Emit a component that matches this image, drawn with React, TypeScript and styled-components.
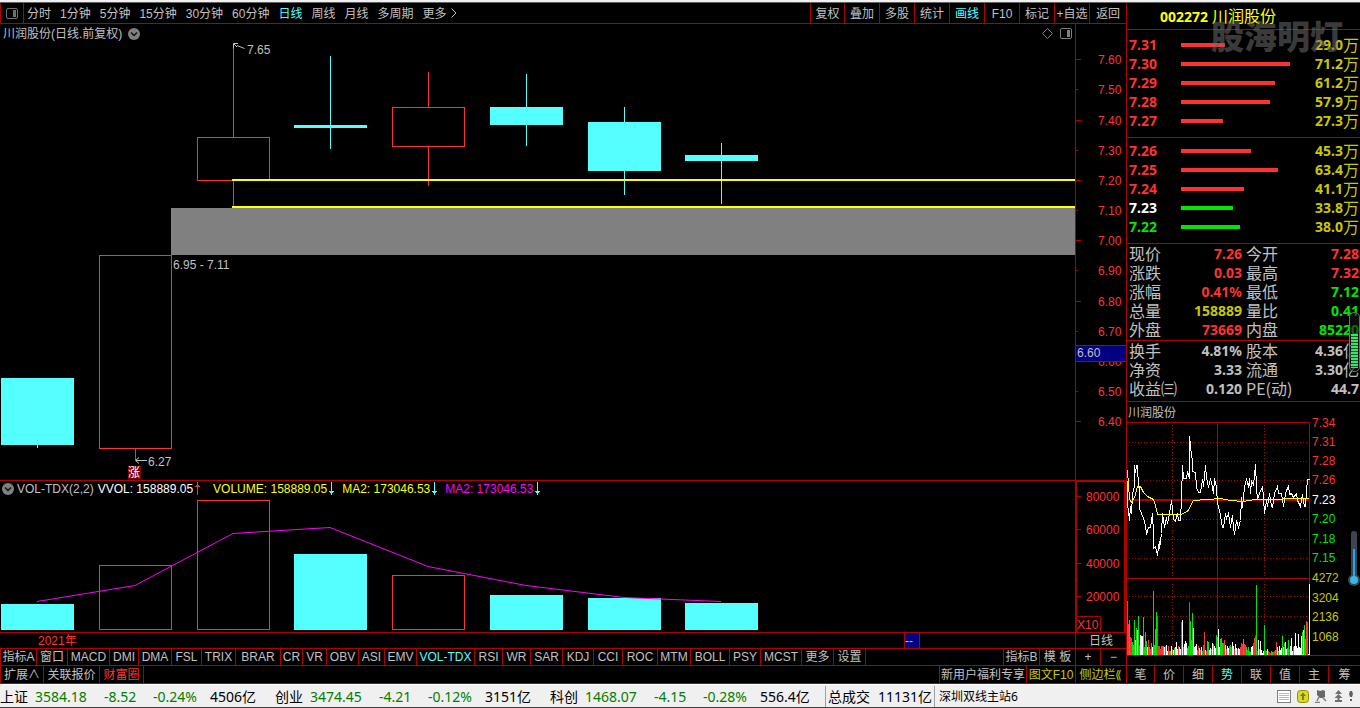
import React from "react";
import styled, { createGlobalStyle } from "styled-components";

const LINE = "#b00000";
const RED = "#ff3232";
const GREEN = "#00e600";
const CYAN = "#54ffff";
const GREY = "#c0c0c0";
const OLIVE = "#c8c800";
const YELLOW = "#ffff00";
const MAGENTA = "#ff00ff";

const Global = createGlobalStyle`
  * { box-sizing: border-box; }
  body {
    margin: 0;
    background: #000;
    color: ${GREY};
    font: 12px/16px "Liberation Sans", "Noto Sans CJK SC", sans-serif;
  }
  svg { display: block; flex: none; }
  svg text { font-size: 12px; }
  button { font: inherit; color: inherit; background: none; border: 0; padding: 0; margin: 0; white-space: nowrap; cursor: pointer; }
`;

/* ---------- page frame ---------- */

const Page = styled.div`
  min-height: 100vh;
  display: flex;
  flex-direction: column;
  border-top: 2px solid #f0f0f0;
`;

const Body = styled.div`
  flex: 1;
  display: grid;
  grid-template-columns: minmax(0, 1fr) 233px;
  border-top: 1px solid #606060;
`;

const Left = styled.main`
  display: flex;
  flex-direction: column;
  min-width: 0;
  border-right: 1px solid ${LINE};
`;

const Right = styled.aside`
  position: relative;
  display: flex;
  flex-direction: column;
  min-width: 0;
`;

const Spacer = styled.div`
  flex: 1;
`;

/* ---------- toolbar ---------- */

const Toolbar = styled.nav`
  display: flex;
  height: 21px;
  border-bottom: 1px solid ${LINE};
  border-left: 1px solid ${LINE};
`;

const IconCell = styled.button`
  width: 23px;
  border-right: 1px solid ${LINE};
  display: flex;
  align-items: center;
  justify-content: center;
`;

const Periods = styled.div`
  display: flex;
  gap: 9px;
  padding-left: 3px;
`;

const PlainButton = styled.button<{ $color?: string }>`
  padding-top: 1px;
  color: ${(p) => p.$color || GREY};
`;

const ToolCell = styled.button<{ $w: number; $color?: string }>`
  width: ${(p) => p.$w}px;
  padding-top: 1px;
  border-left: 1px solid ${LINE};
  color: ${(p) => p.$color || GREY};
`;

/* ---------- charts ---------- */

const ChartRow = styled.section<{ $lined?: boolean }>`
  display: grid;
  grid-template-columns: minmax(0, 1fr) 51px;
  border-top: ${(p) => (p.$lined ? `1px solid ${LINE}` : "0")};
`;

const Plot = styled.div`
  min-width: 0;
`;

const Axis = styled.div`
  border-left: 1px solid ${LINE};
`;

const VolumeAxis = styled.div`
  border: 2px solid ${LINE};
  border-top-width: 1px;
  border-bottom: 0;
`;

const PlotTitle = styled.header`
  display: flex;
  align-items: center;
  height: 18px;
  padding: 1px 2px 0 3px;
`;

const TitleText = styled.h1`
  margin: 0 6px 0 0;
  font: inherit;
`;

const TitleIcons = styled.div`
  display: flex;
  gap: 7px;
  padding-right: 1px;
`;

const Legend = styled.header`
  display: flex;
  align-items: flex-start;
  height: 17px;
  padding-left: 2px;
  gap: 3px;
  & > svg { margin-top: 2px; }
`;

const LegendItem = styled.span<{ $color: string; $after: number }>`
  display: flex;
  align-items: center;
  gap: 2px;
  padding-right: ${(p) => p.$after}px;
  color: ${(p) => p.$color};
`;

/* ---------- bottom rows ---------- */

const DateRow = styled.div`
  display: flex;
  height: 17px;
  line-height: 16px;
  border: solid ${LINE};
  border-width: 1px 0;
`;

const Year = styled.span`
  padding-left: 38px;
  color: ${RED};
`;

const DateMark = styled.span`
  width: 16px;
  margin-right: 155px;
  background: #000080;
  border: solid ${LINE};
  border-width: 0 1px;
`;

const PeriodCell = styled.span`
  width: 51px;
  border-left: 1px solid ${LINE};
  text-align: center;
`;

const CellRow = styled.div<{ $h: number }>`
  display: flex;
  height: ${(p) => p.$h}px;
  border-bottom: 1px solid ${LINE};
  border-left: 1px solid ${LINE};
`;

const Cell = styled.button<{ $w: number; $color?: string; $side?: "left" | "right" }>`
  flex: none;
  width: ${(p) => p.$w}px;
  border: 0 solid ${LINE};
  ${(p) => (p.$side === "left" ? "border-left-width" : "border-right-width")}: 1px;
  display: flex;
  align-items: flex-end;
  justify-content: center;
  color: ${(p) => p.$color || GREY};
`;

/* ---------- quote panel ---------- */

const StockHead = styled.h2`
  margin: 0;
  height: 27px;
  padding-left: 33px;
  border-bottom: 1px solid ${LINE};
  color: ${YELLOW};
  font: 16px/24px "Noto Sans CJK SC", sans-serif;
`;

const Code = styled.b`
  font: bold 14px/24px "Noto Sans", sans-serif;
  margin-right: 4px;
`;

const Book = styled.table<{ $top: number }>`
  width: 100%;
  table-layout: fixed;
  border-collapse: separate;
  border-spacing: 0;
  border-bottom: 1px solid ${LINE};
  padding: ${(p) => p.$top}px 0 7px;
  font: bold 14px/19px "Noto Sans", "Noto Sans CJK SC", sans-serif;
`;

const BookPrice = styled.th<{ $color: string }>`
  width: 54px;
  height: 19px;
  padding: 0 0 0 2px;
  text-align: left;
  color: ${(p) => p.$color};
`;

const BookBar = styled.td`
  padding: 0;
`;

const Bar = styled.div<{ $color: string }>`
  height: 4px;
  background: ${(p) => p.$color};
`;

const BookVolume = styled.td`
  width: 60px;
  height: 19px;
  padding: 0 1px 0 0;
  text-align: right;
  color: ${OLIVE};
`;

const Unit = styled.span`
  font: 16px/19px "Noto Sans CJK SC", sans-serif;
  vertical-align: top;
`;

const Quotes = styled.dl<{ $bottom: number }>`
  display: grid;
  grid-template-columns: 113px 1fr;
  column-gap: 4px;
  margin: 0;
  padding: 0 1px ${(p) => p.$bottom}px 2px;
  border-bottom: 1px solid ${LINE};
`;

const Quote = styled.div`
  display: flex;
  justify-content: space-between;
  height: 19px;
`;

const QuoteName = styled.dt`
  font: 16px/19px "Noto Sans CJK SC", sans-serif;
  white-space: nowrap;
`;

const QuoteValue = styled.dd<{ $color: string }>`
  margin: 0;
  font: bold 14px/19px "Noto Sans", sans-serif;
  color: ${(p) => p.$color};
  white-space: nowrap;
`;

const MiniTitle = styled.h3`
  margin: 0;
  height: 20px;
  padding-left: 1px;
  font: inherit;
  line-height: 22px;
`;

const Tabs = styled.div`
  display: grid;
  grid-template-columns: 28px repeat(6, 29px) 1fr;
  height: 19px;
  border: solid ${LINE};
  border-width: 1px 0;
`;

const Tab = styled.button<{ $on: boolean }>`
  border-right: 1px solid ${LINE};
  color: ${(p) => (p.$on ? CYAN : GREY)};
  &:last-child { border-right: 0; }
`;

const Watermark = styled.div`
  position: absolute;
  top: 12px;
  left: 84px;
  font: 900 33px/40px "Noto Sans CJK SC", sans-serif;
  color: rgba(110, 110, 110, 0.55);
  white-space: nowrap;
  pointer-events: none;
`;

const Gauge = styled.div`
  position: absolute;
  top: 309px;
  right: 0;
  width: 11px;
  height: 60px;
  padding: 21px 1px 2px;
  border: 1px solid #707070;
  border-radius: 5px;
  background: rgba(20, 20, 20, 0.6);
`;

const GaugeFill = styled.div`
  height: 34px;
  background: repeating-linear-gradient(#3fe070 0 2px, #0c5a28 2px 3px);
`;

const Thermo = styled.div`
  position: absolute;
  top: 528px;
  right: 0;
`;

/* ---------- status bar ---------- */

const Status = styled.footer`
  display: flex;
  align-items: center;
  height: 24px;
  border-top: 1px solid #fff;
  border-bottom: 1px solid #404040;
  background: #f0f0f0;
  color: #000;
  font: 14px/22px "Noto Sans", "Noto Sans CJK SC", sans-serif;
  white-space: nowrap;
  overflow: hidden;
  padding-top: 2px;
`;

const StatusItem = styled.span<{ $w: number; $down?: boolean }>`
  flex: none;
  width: ${(p) => p.$w}px;
  color: ${(p) => (p.$down ? "#008000" : "#000")};
`;

const Total = styled.span`
  display: flex;
  gap: 8px;
  padding: 0 2px;
  border: solid #a0a0a0;
  border-width: 0 1px;
`;

const Station = styled.span`
  padding-left: 4px;
  font-size: 12px;
`;

const StatusIcons = styled.div`
  display: flex;
  align-items: center;
  gap: 6px;
  padding: 0 7px 2px 0;
`;

/* ---------- data ---------- */

const periods = ["分时", "1分钟", "5分钟", "15分钟", "30分钟", "60分钟", "日线", "周线", "月线", "多周期", "更多"];
const tools: [string, number][] = [
  ["复权", 34], ["叠加", 35], ["多股", 35], ["统计", 35], ["画线", 35], ["F10", 35], ["标记", 35], ["+自选", 35], ["返回", 37],
];

const indicators: [string, number][] = [
  ["指标A", 36], ["窗口", 31], ["MACD", 42], ["DMI", 29], ["DMA", 33], ["FSL", 30], ["TRIX", 34], ["BRAR", 45],
  ["CR", 22], ["VR", 24], ["OBV", 32], ["ASI", 26], ["EMV", 32], ["VOL-TDX", 58], ["RSI", 28], ["WR", 28],
  ["SAR", 32], ["KDJ", 31], ["CCI", 29], ["ROC", 35], ["MTM", 33], ["BOLL", 39], ["PSY", 31], ["MCST", 41],
  ["更多", 32], ["设置", 32],
];

type Candle = { x: number; top: number; bottom: number; high: number; low: number; up: boolean; vol: number };
const candles: Candle[] = [
  { x: 37, top: 336, bottom: 403, high: 336, low: 406, up: false, vol: 106 },
  { x: 135, top: 213, bottom: 406, high: 213, low: 418, up: true, vol: 67 },
  { x: 233, top: 95, bottom: 138, high: 2, low: 165, up: true, vol: 2 },
  { x: 330, top: 83, bottom: 86, high: 14, low: 107, up: false, vol: 56 },
  { x: 428, top: 65, bottom: 104, high: 30, low: 144, up: true, vol: 77 },
  { x: 526, top: 65, bottom: 83, high: 32, low: 104, up: false, vol: 97 },
  { x: 624, top: 80, bottom: 129, high: 65, low: 153, up: false, vol: 100 },
  { x: 721, top: 113, bottom: 119, high: 101, low: 162, up: false, vol: 105 },
];

const prices = ["7.60", "7.50", "7.40", "7.30", "7.20", "7.10", "7.00", "6.90", "6.80", "6.70", "6.60", "6.50", "6.40"];
const volumes = ["80000", "60000", "40000", "20000"];

type Level = [string, number, string, string, string?];
const asks: Level[] = [
  ["7.31", 44, "29.0", RED], ["7.30", 109, "71.2", RED], ["7.29", 94, "61.2", RED],
  ["7.28", 89, "57.9", RED], ["7.27", 42, "27.3", RED],
];
const bids: Level[] = [
  ["7.26", 70, "45.3", RED], ["7.25", 97, "63.4", RED], ["7.24", 63, "41.1", RED],
  ["7.23", 52, "33.8", GREEN, "#fff"], ["7.22", 59, "38.0", GREEN],
];

type Q = [string, string, string, string?];
const quotes: Q[] = [
  ["现价", "7.26", RED], ["今开", "7.28", RED],
  ["涨跌", "0.03", RED], ["最高", "7.32", RED],
  ["涨幅", "0.41%", RED], ["最低", "7.12", GREEN],
  ["总量", "158889", OLIVE], ["量比", "0.41", GREEN],
  ["外盘", "73669", RED], ["内盘", "85220", GREEN],
];
const finance: Q[] = [
  ["换手", "4.81%", GREY], ["股本", "4.36", GREY, "亿"],
  ["净资", "3.33", GREY], ["流通", "3.30", GREY, "亿"],
  ["收益㈢", "0.120", GREY], ["PE(动)", "44.7", GREY],
];

const tickLine =
  "0,58 0,81 2,98 3,84 4,91 5,72 7,63 7,43 8,50 9,43 10,43 11,65 12,65 12,86 14,91 16,96 18,103 19,112 21,105 23,105 25,91 26,111 26,126 28,124 30,133 31,125 32,119 32,126 34,111 35,91 37,105 39,95 40,101 42,91 44,78 46,97 48,99 50,91 51,98 53,98 54,75 55,43 56,56 59,56 60,49 62,56 62,14 64,33 65,38 65,49 68,50 69,65 71,70 73,70 75,57 76,64 78,43 79,55 81,65 83,56 85,65 86,71 87,56 89,65 90,81 92,88 95,105 96,105 98,91 99,96 101,91 103,105 105,93 106,105 107,112 109,98 111,105 113,98 114,75 115,85 117,65 119,56 121,65 122,56 123,71 124,58 126,63 128,42 129,65 130,77 132,71 135,64 136,75 137,91 139,78 140,84 142,71 144,84 145,85 147,71 150,64 151,71 154,71 156,84 158,71 161,63 162,72 164,71 166,75 169,71 170,78 173,84 175,72 177,84 178,84 179,68 180,57 182,57";
const averageLine =
  "0,49 2,78 4,81 7,76 10,65 13,65 16,71 20,75 26,78 28,84 30,93 54,93 61,89 64,82 66,79 80,78 93,77 103,79 116,80 128,78 182,77";

/* one token per minute column: colour letter and height in pixels */
const minuteVolumes =
  "r54 r31 g35 r18 r17 g13 g10 g35 w15 g27 w25 g39 g10 w20 w19 w19 g38 g8 g23 g14 w8 r15 g8 r6 g12 w8 g64 g10 g26 g43 r39 r9 r9 r6 r9 r9 g9 w8 r9 w10 w4 r9 g4 g4 w9 r6 w5 g7 w8 w13 w6 r9 w8 w6 r33 w35 r8 w11 w14 w12 g7 g9 r53 g34 g15 g42 w27 w8 w9 w11 g5 r9 w7 r5 w8 g4 r10 r23 w5 r4 g14 g13 w5 w7 r6 w12 g11 w9 w7 g20 g18 w26 w8 g16 g17 g12 r12 r15 w10 r6 w9 w7 r9 g10 r8 w13 w9 r6 w11 w7 r6 w7 w6 r8 r12 r11 g16 r11 r10 g8 r5 g8 g4 g3 w8 w9 r12 r17 r19 g70 r4 w15 g6 w14 w5 w2 w4 g30 r5 g4 w6 r4 r3 r2 g4 g3 r3 r4 g5 r13 w8 g4 w9 w5 w7 g19 w8 g12 w13 w6 g7 g15 r6 w9 w17 w4 g8 w9 w22 w9 w7 w21 w8 w7 w19 g23 w25 g30 g16 r34 r33 w1"
    .split(" ")
    .map((t) => ({ color: t[0] === "r" ? RED : t[0] === "g" ? GREEN : "#fff", h: Number(t.slice(1)) }));

const market: [string, number, boolean?][] = [
  ["上证", 35], ["3584.18", 69, true], ["-8.52", 49, true], ["-0.24%", 57, true], ["4506亿", 65],
  ["创业", 35], ["3474.45", 69, true], ["-4.21", 49, true], ["-0.12%", 57, true], ["3151亿", 65],
  ["科创", 35], ["1468.07", 69, true], ["-4.15", 49, true], ["-0.28%", 57, true], ["556.4亿", 65],
];

/* ---------- drawings ---------- */

const PanelIcon = ({ color = "#707070" }: { color?: string }) => (
  <svg width="12" height="11" viewBox="0 0 12 11">
    <rect x="0.5" y="0.5" width="11" height="10" rx="1.5" fill="none" stroke={color} />
    <rect x="7" y="2" width="3" height="7" fill={color} />
  </svg>
);

const DropIcon = () => (
  <svg width="12" height="12" viewBox="0 0 12 12">
    <circle cx="6" cy="6" r="6" fill="#808080" />
    <path d="M3 4.5 L6 7.5 L9 4.5" fill="none" stroke="#101010" strokeWidth="1.5" />
  </svg>
);

const Arrow = ({ up }: { up?: boolean }) => (
  <svg width="5" height="14" viewBox="0 0 5 14">
    {up ? (
      <path d="M2 0h1v3h1v1h1v1H3v8H2V5H0V4h1V3h1z" fill={RED} />
    ) : (
      <path d="M2 0h1v9h2v1H4v1H3v2H2v-2H1v-1H0V9h2z" fill={CYAN} />
    )}
  </svg>
);

const PriceChart = () => (
  <svg width="100%" height="438" role="img" aria-label="日线">
    <rect x="171" y="166" width="100%" height="47" fill="#808080" />
    {candles.map((c) => (
      <g key={c.x} fill={c.up ? "none" : CYAN} stroke={c.up ? RED : CYAN}>
        <path d={`M${c.x + 0.5} ${c.high}V${c.top}M${c.x + 0.5} ${c.bottom}V${c.low}`} />
        {c.up ? (
          <rect x={c.x - 35.5} y={c.top + 0.5} width="72" height={c.bottom - c.top} />
        ) : (
          <rect x={c.x - 36} y={c.top} width="73" height={c.bottom - c.top} stroke="none" />
        )}
        {!c.up && <path d={`M${c.x + 0.5} ${c.high}V${c.low}`} />}
      </g>
    ))}
    <rect x="232" y="137" width="100%" height="2" fill={YELLOW} />
    <rect x="232" y="164" width="100%" height="2" fill={YELLOW} />
    <path d="M233.500 6.500V1.500H238M234 2L237 5M237 3.500L244.500 6.500" fill="none" stroke={GREY} />
    <text x="247" y="12" fill={GREY}>7.65</text>
    <text x="173" y="227" fill={GREY}>6.95 - 7.11</text>
    <path d="M136 418.500H147M139 415.500L135.500 418.500L139 421.500" fill="none" stroke={GREY} />
    <text x="148" y="424" fill={GREY}>6.27</text>
    <rect x="128" y="424" width="13" height="13" fill="#800000" />
    <text x="128" y="435" fill="#fff">涨</text>
  </svg>
);

const PriceAxis = () => (
  <svg width="50" height="456">
    {prices.map((p, i) => {
      const y = Math.round(35.3 + i * 30.17);
      return (
        <g key={p}>
          <path d={`M0 ${y + 0.5}H${i % 2 ? 2 : 5}`} stroke={LINE} />
          <text x="22" y={y + 5} fill={RED}>{p}</text>
        </g>
      );
    })}
    <rect x="0" y="321" width="50" height="17" fill={LINE} />
    <rect x="0" y="322" width="50" height="15" fill="#000080" />
    <text x="1" y="333" fill={GREY}>6.60</text>
  </svg>
);

const VolumeChart = () => (
  <svg width="100%" height="134" role="img" aria-label="VOL-TDX">
    {candles.map((c) =>
      c.up ? (
        <rect key={c.x} x={c.x - 35.5} y={c.vol + 0.5} width="72" height={131 - c.vol} fill="none" stroke={RED} />
      ) : (
        <rect key={c.x} x={c.x - 36} y={c.vol} width="73" height={132 - c.vol} fill={CYAN} />
      )
    )}
    <polyline
      points="37,103.500 135,87.500 233,35.500 330,29.500 428,68.500 526,87.500 624,99.500 721,103.500"
      fill="none"
      stroke={MAGENTA}
    />
  </svg>
);

const VolumeScale = () => (
  <svg width="47" height="150">
    {volumes.map((v, i) => {
      const y = 14 + Math.round(i * 33.4);
      return (
        <g key={v}>
          <path d={`M0 ${y + 0.5}H4${i < 3 ? `M0 ${y + 17.5}H1` : ""}`} stroke={LINE} />
          <text x="9" y={y + 5} fill={RED}>{v}</text>
        </g>
      );
    })}
    <path d="M0 134.500H23.500V149" fill="none" stroke={LINE} />
    <text x="0" y="147" fill={RED}>X10</text>
  </svg>
);

const MiniPlot = styled.svg`
  overflow: visible;
`;

const MiniChart = () => {
  const labels: [string, number, string][] = [
    ["7.34", 1, RED], ["7.31", 20, RED], ["7.28", 39, RED], ["7.26", 58, RED], ["7.23", 78, "#fff"],
    ["7.20", 97, GREEN], ["7.18", 117, GREEN], ["7.15", 136, GREEN],
    ["4272", 156, OLIVE], ["3204", 176, OLIVE], ["2136", 195, OLIVE], ["1068", 215, OLIVE],
  ];
  return (
    <MiniPlot width="100%" height="234" role="img" aria-label="分时走势">
      <g stroke={LINE} fill="none">
        <path d="M0 .5H182.500V233.500M0 156.500H182M0 233.500H233M90.500 0V233" />
        <path d="M0 78H182" strokeWidth="2" />
        <g strokeDasharray="1 2">
          {[20, 39, 58, 97, 117, 136, 174, 194, 213].map((y) => (
            <path key={y} d={`M2 ${y + 0.5}H182`} />
          ))}
          <path d="M45.500 3V233" />
          <path d="M137.500 3V233" />
        </g>
      </g>
      {minuteVolumes.map((m, i) => (
        <rect key={i} x={i} y={233 - m.h} width="1" height={m.h} fill={m.color} />
      ))}
      <rect x="182" y="162" width="1" height="71" fill="#fff" />
      <polyline points={tickLine} fill="none" stroke="#fff" transform="translate(.5 .5)" shapeRendering="crispEdges" />
      <polyline points={averageLine} fill="none" stroke={YELLOW} transform="translate(.5 -.5)" shapeRendering="crispEdges" />
      {labels.map(([t, y, c]) => (
        <text key={t} x="185" y={y + 4} fill={c}>{t}</text>
      ))}
    </MiniPlot>
  );
};

/* ---------- parts ---------- */

const OrderBook = ({ rows, top }: { rows: Level[]; top: number }) => (
  <Book $top={top}>
    <tbody>
      {rows.map(([price, w, vol, color, priceColor]) => (
        <tr key={price}>
          <BookPrice scope="row" $color={priceColor || color}>{price}</BookPrice>
          <BookBar><Bar $color={color} style={{ width: w }} /></BookBar>
          <BookVolume>{vol}<Unit>万</Unit></BookVolume>
        </tr>
      ))}
    </tbody>
  </Book>
);

const QuoteList = ({ rows, bottom }: { rows: Q[]; bottom: number }) => (
  <Quotes $bottom={bottom}>
    {rows.map(([name, value, color, unit]) => (
      <Quote key={name}>
        <QuoteName>{name}</QuoteName>
        <QuoteValue $color={color}>{value}{unit && <Unit>{unit}</Unit>}</QuoteValue>
      </Quote>
    ))}
  </Quotes>
);

export default function App() {
  return (
    <Page>
      <Global />
      <Body>
        <Left>
          <Toolbar>
            <IconCell aria-label="侧栏"><PanelIcon /></IconCell>
            <Periods>
              {periods.map((p) => (
                <PlainButton key={p} $color={p === "日线" ? CYAN : undefined}>{p}</PlainButton>
              ))}
            </Periods>
            <svg width="12" height="20" viewBox="0 0 12 20">
              <path d="M4.500 5.500L9 10L4.500 14.500" fill="none" stroke={GREY} />
            </svg>
            <Spacer />
            {tools.map(([t, w]) => (
              <ToolCell key={t} $w={w} $color={t === "画线" ? CYAN : undefined}>{t}</ToolCell>
            ))}
          </Toolbar>

          <ChartRow>
            <Plot>
              <PlotTitle>
                <TitleText>川润股份(日线.前复权)</TitleText>
                <DropIcon />
                <Spacer />
                <TitleIcons>
                  <svg width="11" height="11" viewBox="0 0 11 11">
                    <path d="M5.500 .5L10.500 5.500L5.500 10.500L.5 5.500Z" fill="none" stroke="#808080" />
                  </svg>
                  <PanelIcon color="#808080" />
                </TitleIcons>
              </PlotTitle>
              <PriceChart />
            </Plot>
            <Axis><PriceAxis /></Axis>
          </ChartRow>

          <ChartRow $lined>
            <Plot>
              <Legend>
                <DropIcon />
                <LegendItem $color={GREY} $after={1}>VOL-TDX(2,2)</LegendItem>
                <LegendItem $color="#fff" $after={10}>VVOL: 158889.05<Arrow up /></LegendItem>
                <LegendItem $color={YELLOW} $after={5}>VOLUME: 158889.05<Arrow /></LegendItem>
                <LegendItem $color={YELLOW} $after={5}>MA2: 173046.53<Arrow /></LegendItem>
                <LegendItem $color={MAGENTA} $after={5}>MA2: 173046.53<Arrow /></LegendItem>
              </Legend>
              <VolumeChart />
            </Plot>
            <VolumeAxis><VolumeScale /></VolumeAxis>
          </ChartRow>

          <DateRow>
            <Year>2021年</Year>
            <Spacer />
            <DateMark>--</DateMark>
            <PeriodCell>日线</PeriodCell>
          </DateRow>

          <CellRow $h={17}>
            {indicators.map(([name, w]) => (
              <Cell key={name} $w={w} $color={name === "VOL-TDX" ? CYAN : undefined}>{name}</Cell>
            ))}
            <Spacer />
            <Cell $w={36} $side="left">指标B</Cell>
            <Cell $w={36} $side="left">模 板</Cell>
            <Cell $w={25} $side="left">+</Cell>
            <Cell $w={26} $side="left">−</Cell>
          </CellRow>

          <CellRow $h={18}>
            <Cell $w={43}>扩展∧</Cell>
            <Cell $w={56}>关联报价</Cell>
            <Cell $w={44} $color={RED}>财富圈</Cell>
            <Spacer />
            <Cell $w={87} $side="left">新用户福利专享</Cell>
            <Cell $w={49} $side="left" $color={OLIVE}>图文F10</Cell>
            <Cell $w={51} $side="left" $color={OLIVE}>侧边栏⟪</Cell>
          </CellRow>
        </Left>

        <Right>
          <StockHead><Code>002272</Code>川润股份</StockHead>
          <OrderBook rows={asks} top={5} />
          <OrderBook rows={bids} top={3} />
          <QuoteList rows={quotes} bottom={1} />
          <QuoteList rows={finance} bottom={3} />
          <MiniTitle>川润股份</MiniTitle>
          <MiniChart />
          <Spacer />
          <Tabs>
            {"笔价细势联值主筹".split("").map((t) => (
              <Tab key={t} $on={t === "势"}>{t}</Tab>
            ))}
          </Tabs>
          <Watermark>股海明灯</Watermark>
          <Gauge><GaugeFill /></Gauge>
          <Thermo>
            <svg width="12" height="56" viewBox="0 0 12 56">
              <rect x="3" y="0" width="6" height="52" rx="3" fill="#3c4650" />
              <circle cx="6" cy="49" r="6" fill="#3c4650" />
              <rect x="5" y="18" width="2" height="30" fill="#20a8f0" />
              <circle cx="6" cy="49" r="4" fill="#38b8e8" />
            </svg>
          </Thermo>
        </Right>
      </Body>

      <Status>
        {market.map(([t, w, down], i) => (
          <StatusItem key={i} $w={w} $down={down}>{t}</StatusItem>
        ))}
        <Total><span>总成交</span><span>11131亿</span></Total>
        <Station>深圳双线主站6</Station>
        <Spacer />
        <StatusIcons>
          <svg width="14" height="13" viewBox="0 0 14 13">
            <rect x="0.5" y="0.5" width="13" height="12" fill="#fff" stroke="#808080" />
            <path d="M2 3.500H12M2 5.500H12M2 7.500H12M2 9.500H12" stroke="#b8b8b8" />
          </svg>
          <svg width="12" height="13" viewBox="0 0 12 13">
            <rect x="0.5" y="0.5" width="11" height="12" rx="3" fill="#d8d830" stroke="#909000" />
            <path d="M6 2.500L9 6H7V10H5V6H3Z" fill="#808000" />
          </svg>
          <svg width="13" height="13" viewBox="0 0 13 13">
            <path d="M2 0L5 1L8 0L10 1L10 7L8 8L5 8L2 5Z" fill="#686868" />
            <path d="M4 7L2 11M0 12.500H5M8 8L11 11" stroke="#808080" strokeWidth="1.500" />
          </svg>
          <svg width="9" height="13" viewBox="0 0 9 13">
            <path d="M4.500 0L8 4H1ZM4.500 4L8.500 8H.5ZM3.500 8H5.500V10H8V12H1V10H3.500Z" fill="#707070" />
          </svg>
          <svg width="4" height="10" viewBox="0 0 4 10">
            <path d="M1 0H3L4 3L3 6H1L0 3ZM1 8H3V10H1Z" fill="#606060" />
          </svg>
        </StatusIcons>
      </Status>
    </Page>
  );
}
